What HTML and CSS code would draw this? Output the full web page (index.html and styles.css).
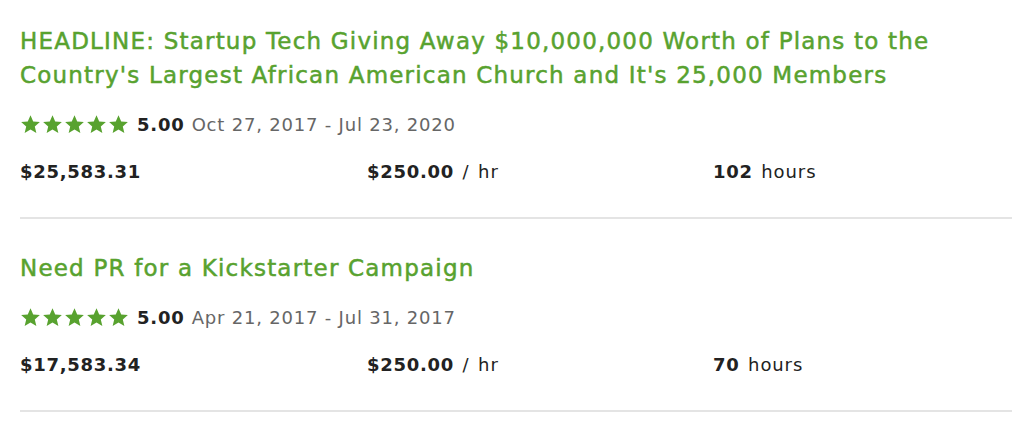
FILE: index.html
```html
<!DOCTYPE html>
<html lang="en">
<head>
  <meta charset="UTF-8">
  <title>Work history</title>
  <link rel="stylesheet" href="styles.css">
</head>
<body>
  <div class="jobs">
    <div class="job first">
      <a class="job-title" href="#">HEADLINE: Startup Tech Giving Away $10,000,000 Worth of Plans to the Country's Largest African American Church and It's 25,000 Members</a>
      <div class="rating">
        <span class="stars">
          <svg viewBox="0 0 24 24"><path d="M12 1.5l3.1 7.1 7.6.6-5.8 5 1.8 7.5L12 17.7l-6.7 4 1.8-7.5-5.8-5 7.6-.6z"/></svg>
          <svg viewBox="0 0 24 24"><path d="M12 1.5l3.1 7.1 7.6.6-5.8 5 1.8 7.5L12 17.7l-6.7 4 1.8-7.5-5.8-5 7.6-.6z"/></svg>
          <svg viewBox="0 0 24 24"><path d="M12 1.5l3.1 7.1 7.6.6-5.8 5 1.8 7.5L12 17.7l-6.7 4 1.8-7.5-5.8-5 7.6-.6z"/></svg>
          <svg viewBox="0 0 24 24"><path d="M12 1.5l3.1 7.1 7.6.6-5.8 5 1.8 7.5L12 17.7l-6.7 4 1.8-7.5-5.8-5 7.6-.6z"/></svg>
          <svg viewBox="0 0 24 24"><path d="M12 1.5l3.1 7.1 7.6.6-5.8 5 1.8 7.5L12 17.7l-6.7 4 1.8-7.5-5.8-5 7.6-.6z"/></svg>
        </span>
        <b class="score">5.00</b>
        <span class="dates">Oct 27, 2017 - Jul 23, 2020</span>
      </div>
      <div class="stats">
        <div><b>$25,583.31</b></div>
        <div><b>$250.00</b> / hr</div>
        <div><b>102</b> hours</div>
      </div>
    </div>
    <div class="job">
      <a class="job-title" href="#">Need PR for a Kickstarter Campaign</a>
      <div class="rating">
        <span class="stars">
          <svg viewBox="0 0 24 24"><path d="M12 1.5l3.1 7.1 7.6.6-5.8 5 1.8 7.5L12 17.7l-6.7 4 1.8-7.5-5.8-5 7.6-.6z"/></svg>
          <svg viewBox="0 0 24 24"><path d="M12 1.5l3.1 7.1 7.6.6-5.8 5 1.8 7.5L12 17.7l-6.7 4 1.8-7.5-5.8-5 7.6-.6z"/></svg>
          <svg viewBox="0 0 24 24"><path d="M12 1.5l3.1 7.1 7.6.6-5.8 5 1.8 7.5L12 17.7l-6.7 4 1.8-7.5-5.8-5 7.6-.6z"/></svg>
          <svg viewBox="0 0 24 24"><path d="M12 1.5l3.1 7.1 7.6.6-5.8 5 1.8 7.5L12 17.7l-6.7 4 1.8-7.5-5.8-5 7.6-.6z"/></svg>
          <svg viewBox="0 0 24 24"><path d="M12 1.5l3.1 7.1 7.6.6-5.8 5 1.8 7.5L12 17.7l-6.7 4 1.8-7.5-5.8-5 7.6-.6z"/></svg>
        </span>
        <b class="score">5.00</b>
        <span class="dates">Apr 21, 2017 - Jul 31, 2017</span>
      </div>
      <div class="stats">
        <div><b>$17,583.34</b></div>
        <div><b>$250.00</b> / hr</div>
        <div><b>70</b> hours</div>
      </div>
    </div>
  </div>
</body>
</html>
```
FILE: styles.css
```css
body {
  margin: 0;
  padding: 0;
  background-color: #ffffff;
  font-family: "DejaVu Sans", sans-serif;
  color: #222222;
}
.jobs {
  padding: 0 12px 0 20px;
}
.job {
  padding: 32px 0 33px;
  border-bottom: 2px solid #e4e4e4;
}
.job.first {
  padding-top: 24px;
}
.job-title {
  display: block;
  color: #58a22f;
  font-size: 23px;
  letter-spacing: 1.2px;
  line-height: 34px;
  text-decoration: none;
  -webkit-text-stroke: 0.5px #58a22f;
}
.rating {
  display: flex;
  align-items: center;
  margin-top: 20px;
  height: 24px;
  font-size: 18px;
}
.stars {
  display: flex;
  gap: 1px;
  margin-right: 8px;
}
.stars svg {
  width: 21px;
  height: 21px;
  fill: #58a22f;
}
.score {
  font-weight: 700;
  letter-spacing: 0.8px;
  margin-right: 7px;
}
.dates {
  color: #666666;
  letter-spacing: 0.8px;
}
.stats {
  display: grid;
  grid-template-columns: 347px 346px 1fr;
  margin-top: 24px;
  font-size: 18px;
  line-height: 24px;
  letter-spacing: 0.9px;
  word-spacing: 2px;
}
.stats b {
  font-weight: 700;
  letter-spacing: 0.7px;
}
```
